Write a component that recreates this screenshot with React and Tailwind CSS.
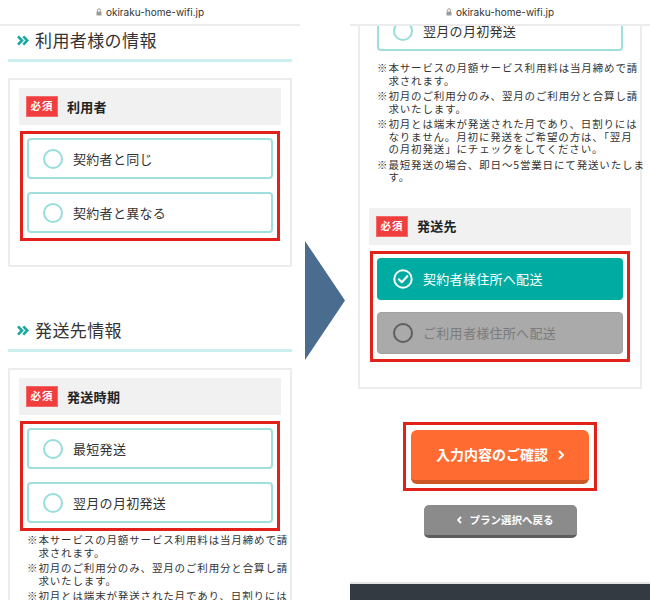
import React from "react";

const JP = "[font-family:'Noto_Sans_CJK_JP','Noto_Sans',sans-serif]";

function Lock() {
  return (
    <svg width="6" height="8" viewBox="0 0 6 8" className="mb-[1px]">
      <path d="M1.5 3.5 V2.3 A1.5 1.5 0 0 1 4.5 2.3 V3.5" fill="none" stroke="#9a9a9a" strokeWidth="1" />
      <rect x="0.5" y="3.5" width="5" height="4" rx="0.6" fill="#9a9a9a" />
    </svg>
  );
}

function StatusBar() {
  return (
    <div className="h-[26px] shrink-0 border-b-2 border-[#ececec] flex items-center justify-center gap-[4px] text-[10px] text-[#333] [font-family:Inter,sans-serif]">
      <Lock />
      <span>okiraku-home-wifi.jp</span>
    </div>
  );
}

function Chev() {
  return (
    <svg width="12" height="11" viewBox="0 0 12 11">
      <path d="M1 1.3 L5 5.5 L1 9.7" fill="none" stroke="#17a8a2" strokeWidth="2.6" />
      <path d="M6.3 1.3 L10.3 5.5 L6.3 9.7" fill="none" stroke="#17a8a2" strokeWidth="2.6" />
    </svg>
  );
}

function Heading({ title, className }) {
  return (
    <div className={className}>
      <div className="h-[33px] pt-[4px] pl-[17px]">
        <div className="flex items-center h-[20px] gap-[6px]">
          <Chev />
          <span className="text-[17px] leading-[20px] tracking-[0.4px] text-[#333]">{title}</span>
        </div>
      </div>
      <div className="mx-[8px] h-[3px] bg-[#cbeeee]" />
    </div>
  );
}

function CardHeader({ label }) {
  return (
    <div className="h-[37px] bg-[#f1f1f1] flex items-center pl-[7px] gap-[9px]">
      <div className="w-[32px] h-[21px] bg-[#f03d3d] border border-[#f46a6a] text-white flex items-center justify-center text-[10.5px] font-bold tracking-[1px] leading-none">
        必須
      </div>
      <span className="text-[13px] font-bold text-[#222] tracking-[0.3px]">{label}</span>
    </div>
  );
}

function Option({ text, h = "h-[41px]" }) {
  return (
    <div className={`${h} border-2 border-[#9fe0de] rounded-[4px] bg-white flex items-center pl-[14px] gap-[10px]`}>
      <div className="w-[20px] h-[20px] rounded-full border-2 border-[#97dedb] shrink-0" />
      <span className="text-[13px] tracking-[0.3px] text-[#333]">{text}</span>
    </div>
  );
}

function Box({ annotated, children, className = "" }) {
  return (
    <div
      className={`mx-[1px] border-[3px] ${annotated ? "border-[#e3211b]" : "border-transparent"} px-[4px] pt-[4px] pb-[5px] ${className}`}
    >
      {children}
    </div>
  );
}

const notes = [
  ["本サービスの月額サービス利用料は当月締めで請", "求されます。"],
  ["初月のご利用分のみ、翌月のご利用分と合算し請", "求いたします。"],
  ["初月とは端末が発送された月であり、日割りには", "なりません。月初に発送をご希望の方は、「翌月", "の月初発送」にチェックをしてください。"],
  ["最短発送の場合、即日〜5営業日にて発送いたしま", "す。"],
];

function Notes({ className = "" }) {
  return (
    <div className={`px-[8px] text-[10.5px] leading-[12.5px] tracking-[0.85px] text-[#333] flex flex-col gap-[3px] ${className}`}>
      {notes.map((lines, i) => (
        <div key={i} className="flex whitespace-nowrap">
          <span className="w-[11.4px] shrink-0">※</span>
          <div className="flex flex-col">
            {lines.map((l, j) => (
              <span key={j}>{l}</span>
            ))}
          </div>
        </div>
      ))}
    </div>
  );
}

function LeftPhone() {
  return (
    <div className="w-[300px] h-[600px] flex flex-col shrink-0">
      <StatusBar />
      <div className="flex-1 overflow-hidden flex flex-col">
        <Heading title="利用者様の情報" />
        <div className="mx-[8px] mt-[16px] border-2 border-[#ececec] pt-[8px] px-[9px] pb-[24px]">
          <CardHeader label="利用者" />
          <Box annotated className="mt-[6px] flex flex-col gap-[13px]">
            <Option text="契約者と同じ" />
            <Option text="契約者と異なる" />
          </Box>
        </div>
        <Heading title="発送先情報" className="mt-[49px]" />
        <div className="mx-[8px] mt-[16px] border-2 border-[#ececec] pt-[8px] px-[9px] pb-[24px] shrink-0">
          <CardHeader label="発送時期" />
          <Box annotated className="mt-[6px] flex flex-col gap-[13px]">
            <Option text="最短発送" />
            <Option text="翌月の月初発送" />
          </Box>
          <Notes className="mt-[3px]" />
        </div>
      </div>
    </div>
  );
}

function Arrow() {
  return (
    <div className="w-[50px] h-[600px] flex items-center shrink-0">
      <svg width="40" height="119" viewBox="0 0 40 119" className="ml-[5px]">
        <polygon points="0,0 40,59.5 0,119" fill="#4a6d8f" />
      </svg>
    </div>
  );
}

function RightPhone() {
  return (
    <div className="w-[300px] h-[600px] flex flex-col shrink-0">
      <StatusBar />
      <div className="flex-1 overflow-hidden flex flex-col">
        <div className="mx-[8px] -mt-[23px] border-x-2 border-b-2 border-[#ececec] px-[9px] pb-[25px]">
          <Box className="pt-[0px]">
            <Option text="翌月の月初発送" />
          </Box>
          <Notes className="mt-[3px]" />
          <div className="mt-[24px]">
            <CardHeader label="発送先" />
          </div>
          <Box annotated className="mt-[6px] flex flex-col gap-[12px]">
            <div className="h-[42px] rounded-[4px] bg-[#00aba1] flex items-center pl-[16px] gap-[10px]">
              <svg width="20" height="20" viewBox="0 0 20 20" className="shrink-0">
                <circle cx="10" cy="10" r="8.7" fill="none" stroke="#fff" strokeWidth="2" />
                <path d="M5.8 10.3 L8.8 13.2 L14.3 7.2" fill="none" stroke="#fff" strokeWidth="2.2" strokeLinecap="round" strokeLinejoin="round" />
              </svg>
              <span className="text-[13px] tracking-[0.3px] text-white">契約者様住所へ配送</span>
            </div>
            <div className="h-[42px] rounded-[4px] bg-[#aaaaaa] border border-[#a2a2a2] flex items-center pl-[15px] gap-[10px]">
              <div className="w-[20px] h-[20px] rounded-full border-2 border-[#5e5e5e] shrink-0" />
              <span className="text-[13px] tracking-[0.3px] text-[#7b7b7b]">ご利用者様住所へ配送</span>
            </div>
          </Box>
        </div>
        <div className="self-center mt-[33px] border-[3px] border-[#e3211b] px-[5px] pt-[5px] pb-[4px]">
          <div className="w-[178px] h-[54px] rounded-[6px] bg-[#ff6b30] border-b-[4px] border-[#cc5626] flex items-center justify-center gap-[10px] text-white text-[14px] font-bold">
            <span>入力内容のご確認</span>
            <svg width="6" height="10" viewBox="0 0 6 10">
              <path d="M1 1 L5 5 L1 9" fill="none" stroke="#fff" strokeWidth="2" />
            </svg>
          </div>
        </div>
        <div className="self-center mt-[14px] w-[153px] h-[33px] rounded-[5px] bg-[#8b8b8b] border-b-[3px] border-[#5e5e5e] flex items-center justify-center gap-[8px] pl-[10px] text-white text-[10.5px] font-bold">
          <svg width="5" height="8" viewBox="0 0 5 8">
            <path d="M4 1 L1 4 L4 7" fill="none" stroke="#fff" strokeWidth="1.8" />
          </svg>
          <span>プラン選択へ戻る</span>
        </div>
        <div className="mt-[44px] flex-1 bg-[#343a42] border-t-2 border-[#e4e4e4]" />
      </div>
    </div>
  );
}

export default function App() {
  return (
    <div className={`w-[650px] h-[600px] bg-white flex overflow-hidden ${JP}`}>
      <LeftPhone />
      <Arrow />
      <RightPhone />
    </div>
  );
}
